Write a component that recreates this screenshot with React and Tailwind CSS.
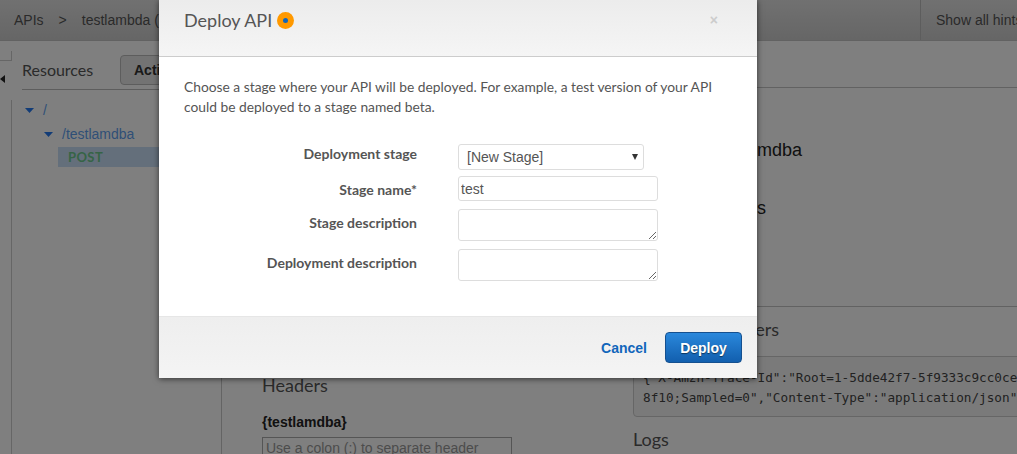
const lato = "font-['Lato','Liberation_Sans',sans-serif]";

function ConsoleBehind() {
  return (
    <div className="flex h-full flex-col bg-white font-['Liberation_Sans',Arial,sans-serif] text-[#555]">
      <header className="flex h-[41px] shrink-0 items-center justify-between border-b border-[#c4c4c4] bg-gradient-to-b from-[#e2e2e2] to-[#cccccc] pl-[14px] text-sm">
        <div className="flex items-center">
          <span>APIs</span>
          <span className="mx-[15px]">&gt;</span>
          <span>testlambda (</span>
        </div>
        <div className="flex h-full w-[97px] items-center whitespace-nowrap border-l border-[#bbb] pl-[15px]">Show all hints</div>
      </header>

      <div className="flex min-h-0 flex-1">
        <aside className="relative w-[12px] shrink-0">
          <div className="h-[10px] w-[12px] mt-[10px] border-r border-b border-[#ccc]" />
          <svg className="mt-[14px]" width="5" height="8" viewBox="0 0 5 8"><path d="M0 4l5-4v8z" fill="#222" /></svg>
          <div className="absolute bottom-0 right-0 top-[59px] border-r border-[#ccc]" />
        </aside>

        <section className="w-[210px] shrink-0 border-r border-[#c8c8c8] pl-[10px]">
          <div className="flex h-[49px] items-center border-b border-[#bbb] pt-[10px]">
            <h2 className={`${lato} w-[98px] text-base`}>Resources</h2>
            <button className="h-[30px] w-[90px] rounded-[4px] border border-[#bbb] bg-[#e6e6e6] pl-[13px] text-left text-sm font-bold text-[#333]">Actions</button>
          </div>
          <div className="pt-[11px] text-sm text-[#5f9fee]">
            <div className="flex h-[18px] items-center pl-[3px]">
              <svg width="9" height="5" viewBox="0 0 9 5"><path d="M0 0h9L4.500 5z" fill="#2478ee" /></svg>
              <span className="ml-[9px]">/</span>
            </div>
            <div className="mt-[6px] flex h-[18px] items-center pl-[22px]">
              <svg width="9" height="5" viewBox="0 0 9 5"><path d="M0 0h9L4.500 5z" fill="#2478ee" /></svg>
              <span className="ml-[9px]">/testlamdba</span>
            </div>
            <div className={`${lato} ml-[36px] mt-[4px] flex h-[20px] items-center bg-[#c8dff7] pl-[10px] text-[13px] font-bold tracking-[0.4px] text-[#6cc98c]`}>POST</div>
          </div>
        </section>

        <main className="min-w-0 flex-1">
          <div className="h-[47px] border-b border-[#c4c4c4]" />
          <div className="flex h-[219px] flex-col border-b border-[#c4c4c4] pl-[535px]">
            <p className="mt-[50px] text-lg leading-[24px] text-[#222]">mdba</p>
            <p className="mt-[34px] text-lg leading-[24px] text-[#222]">s</p>
          </div>
          <div className="flex gap-[121px] pl-[40px]">
            <div className="w-[250px] shrink-0 pt-[66px]">
              <h3 className={`${lato} text-lg leading-[24px]`}>Headers</h3>
              <p className="mt-[15px] text-sm font-bold leading-[20px] text-[#222]">{"{testlamdba}"}</p>
              <div className="mt-[5px] h-[40px] border border-[#aaa] px-[3px] text-sm text-[#999]">Use a colon (:) to separate header</div>
            </div>
            <div className="min-w-0 flex-1 overflow-hidden pt-[10px]">
              <h3 className={`${lato} text-lg leading-[24px]`}>Response Headers</h3>
              <pre className="mt-[15px] h-[61px] w-[500px] overflow-hidden rounded-l-[4px] border border-[#ccc] bg-[#f5f5f5] pt-[11px] pl-[9px] font-['DejaVu_Sans_Mono',monospace] text-[12.7px] leading-[20px] text-[#444]">{`{"X-Amzn-Trace-Id":"Root=1-5dde42f7-5f9333c9cc0ce\n8f10;Sampled=0","Content-Type":"application/json"}`}</pre>
              <h3 className={`${lato} mt-[10px] text-lg leading-[24px]`}>Logs</h3>
            </div>
          </div>
        </main>
      </div>
    </div>
  );
}

function Field({ label, labelClass = "", className = "", children }) {
  return (
    <div className={`flex ${className}`}>
      <label className={`w-[258px] shrink-0 text-right text-sm font-bold leading-[20px] ${labelClass}`}>{label}</label>
      <div className="ml-[41px]">{children}</div>
    </div>
  );
}

function DeployModal() {
  return (
    <div className={`${lato} ml-[159px] flex h-[378px] w-[598px] flex-col bg-white text-[#555] shadow-[0_1px_6px_rgba(0,0,0,0.6)]`}>
      <div className="flex h-[57px] shrink-0 items-start justify-between border-b border-[#ccc] bg-gradient-to-b from-[#ececec] to-[#f5f5f5] pl-[25px] pr-[39px] pt-[8px]">
        <h1 className="flex items-center text-lg leading-[24px]">
          Deploy API
          <svg className="ml-[5px]" width="17" height="17" viewBox="0 0 17 17">
            <circle cx="8.500" cy="8.500" r="8.500" fill="#ff9900" />
            <circle cx="8.500" cy="8.500" r="2.500" fill="#1166bb" />
          </svg>
        </h1>
        <span className="font-['Liberation_Sans',sans-serif] text-sm font-bold leading-[24px] text-[#ccc]">×</span>
      </div>

      <div className="flex-1 pl-[25px] pt-[20px]">
        <p className="w-[540px] text-[13.8px] leading-[20px]">
          Choose a stage where your API will be deployed. For example, a test version of your API could be deployed to a stage named beta.
        </p>
        <div className="ml-[-25px] mt-[27px] text-sm">
          <Field label="Deployment stage">
            <div className="relative h-[26px] w-[186px]">
              <select className="h-full w-full appearance-none rounded-[3px] border border-[#ddd] bg-white pl-[8px] font-['Liberation_Sans',sans-serif] text-sm text-[#555]">
                <option>[New Stage]</option>
              </select>
              <svg className="absolute right-[6px] top-[10px]" width="6" height="6" viewBox="0 0 6 6"><path d="M0 0h6L3 6z" fill="#333" /></svg>
            </div>
          </Field>
          <Field label="Stage name*" labelClass="pt-1" className="mt-[6px]">
            <input readOnly value="test" className="h-[25px] w-[200px] rounded-[3px] border border-[#ddd] bg-white px-[2px] font-['Liberation_Sans',sans-serif] text-sm text-[#555]" />
          </Field>
          <Field label="Stage description" labelClass="pt-1" className="mt-[8px]">
            <textarea readOnly className="block h-[32px] w-[200px] rounded-[3px] border border-[#ddd]" />
          </Field>
          <Field label="Deployment description" labelClass="pt-1" className="mt-[8px]">
            <textarea readOnly className="block h-[32px] w-[200px] rounded-[3px] border border-[#ddd]" />
          </Field>
        </div>
      </div>

      <div className="flex h-[62px] shrink-0 items-center justify-end border-t border-[#e6e6e6] bg-gradient-to-b from-[#eeeeee] to-[#f4f4f4] pr-[15px] font-['Liberation_Sans',sans-serif]">
        <a className="mr-[18px] text-sm font-bold text-[#1166bb]">Cancel</a>
        <button className="h-[31px] w-[77px] rounded-[4px] border border-[#15508f] bg-gradient-to-b from-[#2a88dc] to-[#125fae] text-sm font-bold text-white [text-shadow:0_1px_1px_rgba(0,0,0,0.5)]">Deploy</button>
      </div>
    </div>
  );
}

export default function App() {
  return (
    <div className="relative h-[454px] w-[1017px] overflow-hidden">
      <ConsoleBehind />
      <div className="absolute inset-0 bg-black/50">
        <DeployModal />
      </div>
    </div>
  );
}
